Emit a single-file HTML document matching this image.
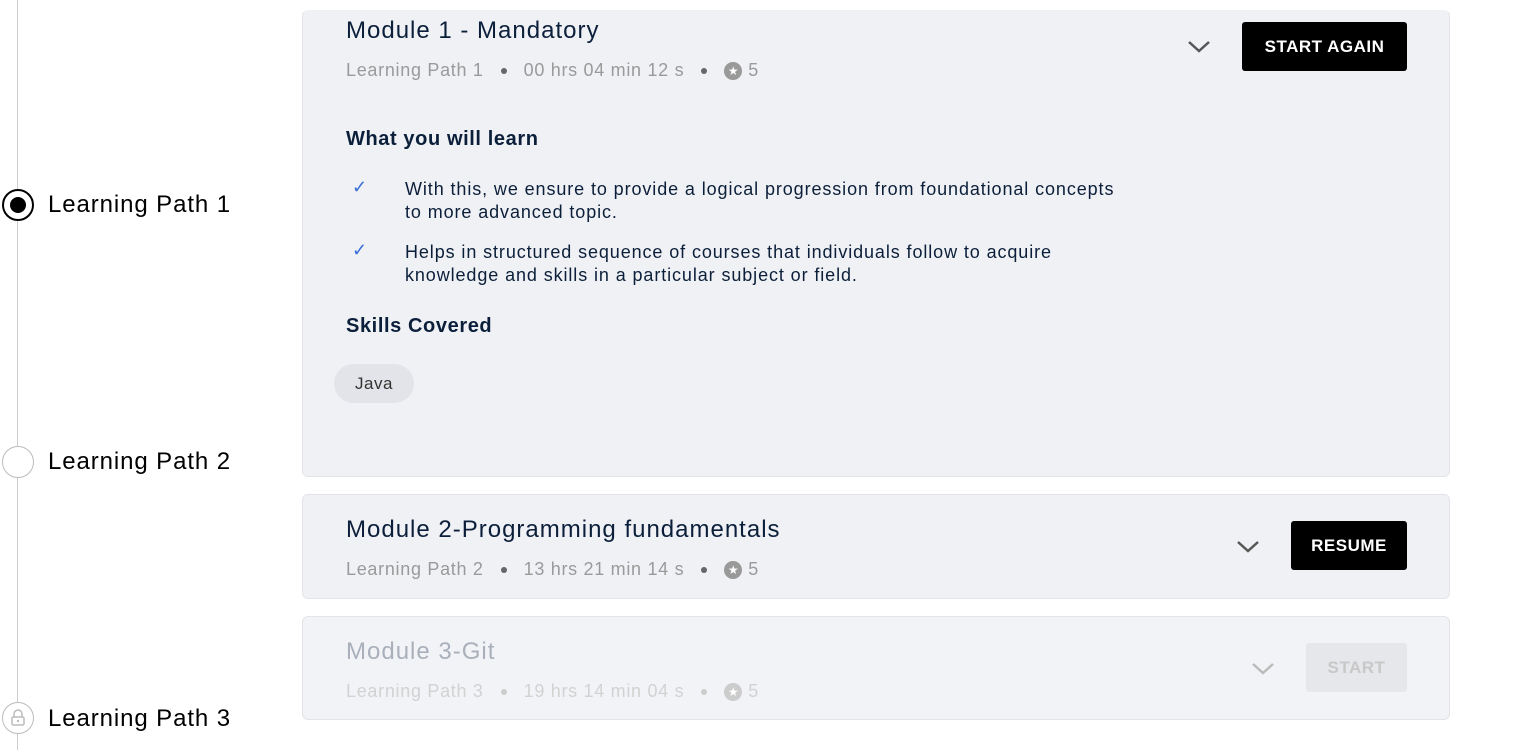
<!DOCTYPE html>
<html><head><style>
body{margin:0;width:1526px;height:750px;background:#fff;font-family:"Liberation Sans",sans-serif;position:relative;overflow:hidden;color:#0b1f3a}
.abs{position:absolute}
.line{left:17px;top:0;width:1px;height:750px;background:#ccc}
.circ{width:32px;height:32px;border-radius:50%;background:#fff;box-sizing:border-box;left:2px}
.lp{left:48px;font-size:24px;color:#000;letter-spacing:0.9px}
.card{left:302px;width:1148px;background:#f0f1f5;border:1px solid #e3e4e8;border-radius:6px;box-sizing:border-box}
.title{font-size:24px;color:#0b1f3a;letter-spacing:1px}
.meta{font-size:18px;color:#9a9a9a;white-space:nowrap;letter-spacing:0.7px}
.meta .d{display:inline-block;width:6px;height:6px;border-radius:50%;background:#666;margin:0 17px;vertical-align:middle}
.star{display:inline-block;width:18px;height:18px;border-radius:50%;background:#999;color:#fff;font-size:12px;text-align:center;line-height:18px;vertical-align:-2px;margin-right:6px;letter-spacing:0;position:relative;top:-3px}
.btn{background:#000;color:#fff;font-size:17px;font-weight:bold;text-align:center;border-radius:3px;height:49px;line-height:49px;letter-spacing:0.5px}
.h{font-size:20px;color:#0b1f3a;font-weight:bold;letter-spacing:0.6px}
.li{font-size:18px;color:#0b1f3a;line-height:23px;left:405px;white-space:nowrap;letter-spacing:0.9px}
.chk{left:352px;color:#3a6fd8;font-size:18px}
</style></head><body>
<div class="abs line"></div>
<div class="abs circ" style="top:189px;border:2px solid #000"><div class="abs" style="left:6px;top:6px;width:16px;height:16px;border-radius:50%;background:#000"></div></div>
<div class="abs lp" style="top:191px">Learning Path 1</div>
<div class="abs circ" style="top:446px;border:1.5px solid #bbb"></div>
<div class="abs lp" style="top:448px">Learning Path 2</div>
<div class="abs circ" style="top:702px;border:1.5px solid #bbb">
<svg class="abs" style="left:7px;top:6px" width="16" height="18" viewBox="0 0 16 18"><path d="M4 8V5a4 4 0 0 1 8 0v3" fill="none" stroke="#bbb" stroke-width="1.5"/><rect x="2" y="8" width="12" height="8" rx="1.5" fill="none" stroke="#bbb" stroke-width="1.5"/><circle cx="8" cy="12" r="1.2" fill="#bbb"/></svg></div>
<div class="abs lp" style="top:705px">Learning Path 3</div>

<div class="abs card" style="top:10px;height:467px;border-top-color:#f0f1f5"></div>
<div class="abs title" style="left:346px;top:17px">Module 1 - Mandatory</div>
<div class="abs meta" style="left:346px;top:60px">Learning Path 1<span class="d"></span>00 hrs 04 min 12 s<span class="d"></span><span class="star">★</span>5</div>
<svg class="abs" style="left:1187px;top:40px" width="24" height="14"><path d="M2 2l10 9 10-9" fill="none" stroke="#555" stroke-width="2.5"/></svg>
<div class="abs btn" style="left:1242px;top:22px;width:165px">START AGAIN</div>
<div class="abs h" style="left:346px;top:128px">What you will learn</div>
<div class="abs chk" style="top:177px">✓</div>
<div class="abs li" style="top:178px">With this, we ensure to provide a logical progression from foundational concepts<br>to more advanced topic.</div>
<div class="abs chk" style="top:240px">✓</div>
<div class="abs li" style="top:241px">Helps in structured sequence of courses that individuals follow to acquire<br>knowledge and skills in a particular subject or field.</div>
<div class="abs h" style="left:346px;top:315px">Skills Covered</div>
<div class="abs" style="left:334px;top:364px;width:80px;height:39px;border-radius:20px;background:#e2e4e9;font-size:17px;text-align:center;line-height:39px;color:#333;letter-spacing:0.5px">Java</div>

<div class="abs card" style="top:494px;height:105px"></div>
<div class="abs title" style="left:346px;top:516px">Module 2-Programming fundamentals</div>
<div class="abs meta" style="left:346px;top:559px">Learning Path 2<span class="d"></span>13 hrs 21 min 14 s<span class="d"></span><span class="star">★</span>5</div>
<svg class="abs" style="left:1236px;top:540px" width="24" height="14"><path d="M2 2l10 9 10-9" fill="none" stroke="#555" stroke-width="2.5"/></svg>
<div class="abs btn" style="left:1291px;top:521px;width:116px">RESUME</div>

<div class="abs card" style="top:616px;height:104px;background:#f2f3f6"></div>
<div class="abs title" style="left:346px;top:638px;color:#a9b0bb">Module 3-Git</div>
<div class="abs meta" style="left:346px;top:681px;color:#d2d2d2">Learning Path 3<span class="d" style="background:#ccc"></span>19 hrs 14 min 04 s<span class="d" style="background:#ccc"></span><span class="star" style="background:#ccc">★</span>5</div>
<svg class="abs" style="left:1251px;top:662px" width="24" height="14"><path d="M2 2l10 9 10-9" fill="none" stroke="#bbb" stroke-width="2.5"/></svg>
<div class="abs btn" style="left:1306px;top:643px;width:101px;background:#e6e7ea;color:#c8c8c8">START</div>
</body></html>
